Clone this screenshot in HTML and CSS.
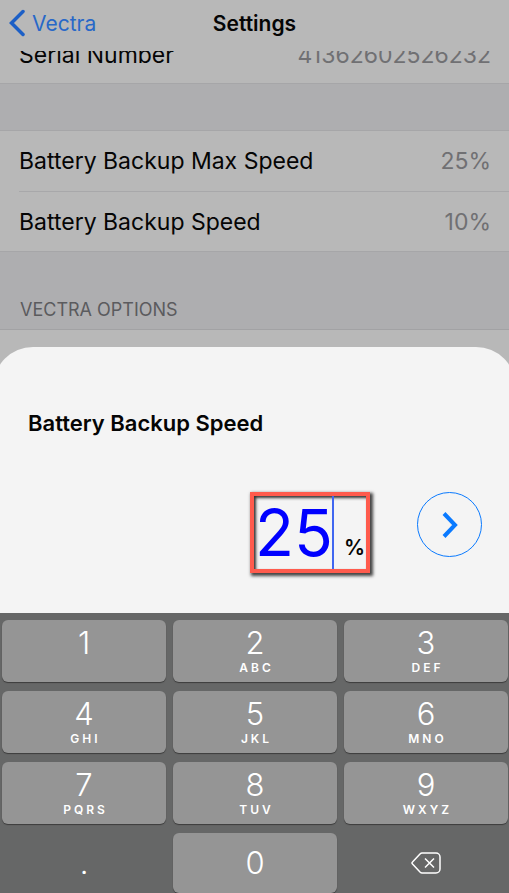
FILE: index.html
```html
<!DOCTYPE html>
<html lang="en">
<head>
<meta charset="utf-8">
<meta name="viewport" content="width=device-width, initial-scale=1">
<title>Settings</title>
<link rel="stylesheet" href="styles.css">
</head>
<body>
<div class="screen">
  <header class="nav">
    <a class="back" href="#">
      <svg class="back-icon" viewBox="0 0 16 28" aria-hidden="true"><path d="M14 2.5 2.5 14 14 25.5"/></svg>
      <span>Vectra</span>
    </a>
    <h1 class="nav-title">Settings</h1>
  </header>
  <main class="settings">
    <dl class="group group-scrolled">
      <div class="row"><dt>Serial Number</dt><dd>41362602526232</dd></div>
    </dl>
    <dl class="group">
      <div class="row"><dt>Battery Backup Max Speed</dt><dd>25%</dd></div>
      <div class="row"><dt>Battery Backup Speed</dt><dd>10%</dd></div>
    </dl>
    <h2 class="section-title">VECTRA OPTIONS</h2>
  </main>
  <form class="sheet">
    <label class="sheet-title" for="speed">Battery Backup Speed</label>
    <div class="entry">
      <div class="field">
        <input class="value" id="speed" type="text" inputmode="decimal" value="25">
        <span class="caret"></span>
        <span class="unit">%</span>
      </div>
      <button class="next" type="submit" aria-label="Next">
        <svg class="next-icon" viewBox="0 0 16 26" aria-hidden="true"><path d="M2 1.500 13 13 2 24.500"/></svg>
      </button>
    </div>
  </form>
  <div class="keypad">
    <button class="key" type="button"><span class="digit">1</span></button>
    <button class="key" type="button"><span class="digit">2</span><span class="letters">ABC</span></button>
    <button class="key" type="button"><span class="digit">3</span><span class="letters">DEF</span></button>
    <button class="key" type="button"><span class="digit">4</span><span class="letters">GHI</span></button>
    <button class="key" type="button"><span class="digit">5</span><span class="letters">JKL</span></button>
    <button class="key" type="button"><span class="digit">6</span><span class="letters">MNO</span></button>
    <button class="key" type="button"><span class="digit">7</span><span class="letters">PQRS</span></button>
    <button class="key" type="button"><span class="digit">8</span><span class="letters">TUV</span></button>
    <button class="key" type="button"><span class="digit">9</span><span class="letters">WXYZ</span></button>
    <button class="key key-bottom key-plain" type="button"><span class="digit">.</span></button>
    <button class="key key-bottom" type="button"><span class="digit">0</span></button>
    <button class="key key-bottom key-plain" type="button" aria-label="Delete">
      <svg class="delete-icon" viewBox="0 0 30 22" aria-hidden="true"><path d="M11 1h14a4 4 0 0 1 4 4v12a4 4 0 0 1-4 4H11q-1 0-2-1L1.500 12q-1-1 0-2L9 2q1-1 2-1Z"/><path d="m14 6.500 9 9m0-9-9 9"/></svg>
    </button>
  </div>
</div>
</body>
</html>
```
FILE: styles.css
```css
* {
  box-sizing: border-box;
}

body {
  margin: 0;
  background: #b8b8b8;
  color: #050505;
  font-family: Inter, "Liberation Sans", sans-serif;
}

button,
input {
  font: inherit;
  border: 0;
  padding: 0;
  margin: 0;
}

.screen {
  display: flex;
  flex-direction: column;
  min-height: 100vh;
  overflow: hidden;
}

.nav {
  display: grid;
  grid-template-columns: 1fr auto 1fr;
  align-items: center;
  height: 51px;
  padding: 0 9px 5px;
}

.back {
  display: flex;
  align-items: center;
  gap: 7px;
  color: #2868c8;
  font-size: 21px;
  text-decoration: none;
}

.back-icon {
  width: 16px;
  height: 28px;
  fill: none;
  stroke: #1c5fc6;
  stroke-width: 3.5;
  stroke-linecap: round;
}

.nav-title {
  margin: 0;
  font-size: 21px;
  font-weight: 600;
}

.settings {
  background: #aeaeb0;
}

.group {
  margin: 0 0 46px;
  background: #b8b8b8;
  border-top: 1px solid #a6a6a8;
  border-bottom: 1px solid #a6a6a8;
}

.group-scrolled {
  display: flex;
  flex-direction: column;
  justify-content: flex-end;
  height: 33px;
  border-top: 0;
  overflow: hidden;
}

.row {
  display: flex;
  flex-shrink: 0;
  align-items: center;
  justify-content: space-between;
  height: 60px;
  margin-left: 19px;
  padding-right: 18px;
  font-size: 23px;
}

.group-scrolled .row {
  height: 57px;
}

.row + .row {
  border-top: 1px solid #a8a8aa;
}

.row dd {
  margin: 0;
  color: #707073;
}

.section-title {
  margin: 0;
  padding: 0 20px 8px;
  border-bottom: 1px solid #a2a2a4;
  color: #5b5b5e;
  font-size: 18px;
  font-weight: 400;
  line-height: 23px;
}

.sheet {
  margin: 17px -7px 0;
  padding: 62px 34px 40px 35px;
  border-radius: 40px 40px 0 0;
  background: #f4f4f4;
}

.sheet-title {
  display: block;
  margin-bottom: 55px;
  font-size: 22px;
  font-weight: 600;
  line-height: 28px;
}

.entry {
  display: flex;
  align-items: flex-start;
  justify-content: flex-end;
  gap: 47px;
}

.field {
  display: flex;
  align-items: stretch;
  height: 81px;
  padding: 0 1px;
  border: 4px solid #ff5b4d;
  box-shadow: 2px 2px 3px 1px #444, inset 2px 2px 3px #333;
}

.value {
  width: 77px;
  background: transparent;
  color: #00f;
  font-size: 64px;
  outline: 0;
}

.caret {
  width: 2px;
  background: #4066f0;
}

.unit {
  align-self: flex-end;
  margin-left: 10px;
  padding-bottom: 9px;
  font-size: 21px;
  font-weight: 600;
  line-height: 24px;
}

.next {
  display: grid;
  place-items: center;
  width: 65px;
  height: 65px;
  border: 1px solid #0a7aff;
  border-radius: 50%;
  background: transparent;
}

.next-icon {
  width: 16px;
  height: 26px;
  fill: none;
  stroke: #0a7aff;
  stroke-width: 4;
}

.keypad {
  display: grid;
  flex: 1;
  grid-template-columns: repeat(3, 1fr);
  align-content: start;
  gap: 9px 7px;
  padding: 7px 1px 0 2px;
  background: #666767;
}

.key {
  display: flex;
  flex-direction: column;
  align-items: center;
  height: 62px;
  padding-top: 8px;
  border-radius: 6px;
  background: #959595;
  box-shadow: 0 1px 1px #3c3c3c;
  color: #fff;
}

.key-bottom {
  justify-content: center;
  height: 60px;
  padding-top: 0;
}

.key-plain {
  background: transparent;
  box-shadow: none;
}

.digit {
  font-size: 31px;
  font-weight: 300;
  line-height: 30px;
}

.letters {
  padding-left: 3px;
  font-size: 12px;
  font-weight: 600;
  letter-spacing: 3px;
  line-height: 20px;
}

.delete-icon {
  width: 30px;
  height: 22px;
  fill: none;
  stroke: #fff;
  stroke-width: 1.5;
}
```
